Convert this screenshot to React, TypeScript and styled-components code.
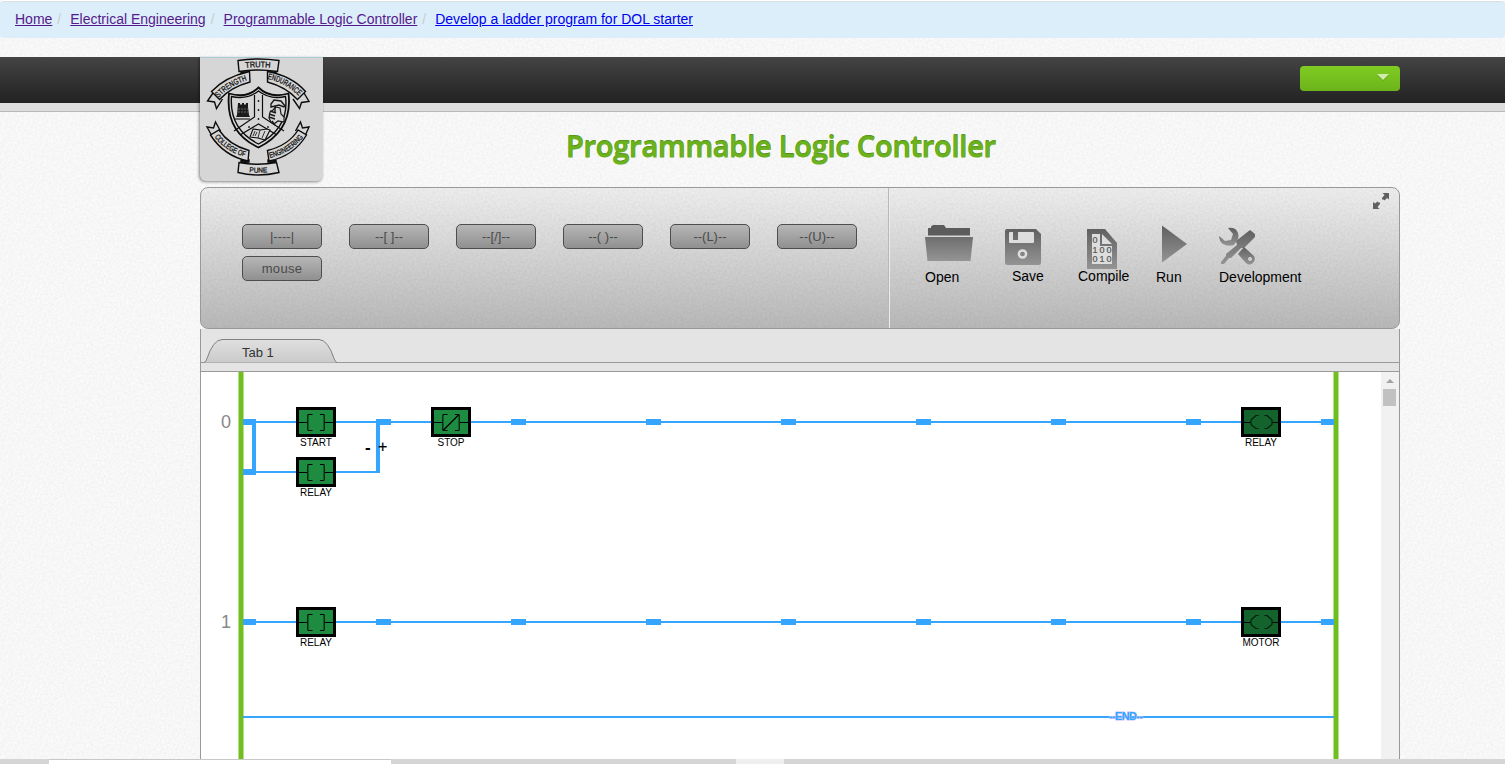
import React from "react";
import styled, { createGlobalStyle } from "styled-components";

const grain = (strength: number) =>
  `url("data:image/svg+xml,${encodeURIComponent(
    `<svg xmlns='http://www.w3.org/2000/svg' width='200' height='200'><filter id='n' x='0' y='0' width='100%' height='100%'><feTurbulence type='fractalNoise' baseFrequency='0.45' numOctaves='2' stitchTiles='stitch'/><feColorMatrix values='0 0 0 0 0  0 0 0 0 0  0 0 0 0 0  ${strength} 0 0 0 0'/></filter><rect width='200' height='200' filter='url(#n)'/></svg>`
  )}")`;

const GlobalStyle = createGlobalStyle`
  * { box-sizing: border-box; }
  body {
    margin: 0;
    overflow: hidden;
    font-family: "Liberation Sans", Arial, sans-serif;
    font-size: 14px;
    color: #000;
  }
`;

const Page = styled.div`
  display: flex;
  flex-direction: column;
  width: 100%;
  height: 764px;
  overflow: hidden;
  background: ${grain(0.065)} #fff;
`;

const Breadcrumb = styled.nav`
  flex: none;
  display: flex;
  align-items: flex-start;
  height: 38px;
  padding: 8px 15px 0;
  border-top: 1px solid #fff;
  background: #dceefa;
  box-shadow: inset 0 1px 0 #d9dfe3;
  border-radius: 4px;
  line-height: 20px;
`;

const Crumb = styled.a<{ $fresh?: boolean }>`
  color: ${(p) => (p.$fresh ? "#0000ee" : "#551a8b")};
  text-decoration: underline;
`;

const Slash = styled.span`
  padding: 0 9px 0 5px;
  color: #ccc;
`;

const Header = styled.header`
  flex: none;
  height: 55px;
  margin-top: 19px;
  border-bottom: 1px solid #b9b9b9;
  background: linear-gradient(#444, #222) 0 0 / 100% 46px no-repeat #ddd;
`;

const Container = styled.div`
  width: 1200px;
  margin: 0 0 0 200px;
`;

const HeaderRow = styled(Container)`
  display: flex;
  justify-content: space-between;
  align-items: flex-start;
`;

const LogoCard = styled.div`
  position: relative;
  width: 123px;
  height: 124px;
  background: #d6d6d6;
  border-top: 1px solid #a9cbd6;
  border-radius: 0 0 6px 6px;
  box-shadow: -1px 1px 3px rgba(0, 0, 0, 0.45);
  svg { display: block; margin-top: -1px; }
`;

const UserMenu = styled.button`
  display: flex;
  justify-content: flex-end;
  width: 100px;
  height: 25px;
  margin-top: 9px;
  padding: 8px 11px;
  border: 0;
  border-radius: 4px;
  background: linear-gradient(#7fcc22, #6db31b);
`;

const Title = styled.h1`
  flex: none;
  height: 75px;
  margin: 0;
  padding: 14px 0 0 566px;
  font: 600 29px/40px "Open Sans", sans-serif;
  letter-spacing: -0.25px;
  white-space: nowrap;
  color: #6bb31d;
  -webkit-text-stroke: 0.8px #68ad1d;
  text-shadow: 0 -1px 0 #4b8111;
`;

const Workspace = styled(Container)`
  flex: 1;
  display: flex;
  flex-direction: column;
  min-height: 0;
`;

const Toolbar = styled.section`
  flex: none;
  display: flex;
  height: 142px;
  border: 1px solid #999;
  border-radius: 8px;
  background: ${grain(0.08)}, linear-gradient(#f4f4f4, #bdbdbd);
`;

const Palette = styled.div`
  width: 688px;
  padding: 36px 0 0 41px;
  display: grid;
  grid-template-columns: repeat(6, 80px);
  grid-auto-rows: 25px;
  column-gap: 27px;
  row-gap: 7px;
  border-right: 1px solid #b8b8b8;
`;

const PaletteButton = styled.button`
  padding: 0;
  border: 1px solid #4d4d4d;
  border-radius: 5px;
  background: linear-gradient(#b6b6b6, #909090);
  font: 13px/22px "Liberation Sans", Arial, sans-serif;
  letter-spacing: ${(p) => (p.name === "mouse" ? "0.3px" : "0")};
  color: #4a4a4a;
`;

const Actions = styled.div`
  position: relative;
  flex: 1;
  display: flex;
  align-items: flex-start;
  padding: 34px 0 0 35px;
  border-left: 1px solid #ececec;
`;

const Action = styled.div<{ $w: number; $indent?: number; $up?: number; $textIndent?: number }>`
  width: ${(p) => p.$w}px;
  line-height: 16px;
  svg { display: block; height: 48px; margin-left: ${(p) => p.$indent ?? 0}px; overflow: visible; }
  span {
    display: block;
    margin-top: ${(p) => -1 - (p.$up ?? 0)}px;
    padding-left: ${(p) => p.$textIndent ?? 0}px;
    white-space: nowrap;
  }
`;

const Expand = styled.div`
  position: absolute;
  right: 10px;
  top: 5px;
  svg { display: block; }
`;

const Editor = styled.section`
  flex: 1;
  display: flex;
  flex-direction: column;
  min-height: 0;
  border: solid #999;
  border-width: 0 1px;
  background: #e4e4e4;
`;

const TabBar = styled.div`
  flex: none;
  height: 34px;
  padding: 10px 0 0 3px;
  border-bottom: 1px solid #999;
`;

const Tab = styled.div`
  position: relative;
  width: 133px;
  height: 24px;
  padding-left: 38px;
  font-size: 13px;
  line-height: 27px;
  color: #333;
  svg { position: absolute; left: 0; top: 0; }
  span { position: relative; }
`;

const Board = styled.div`
  flex: 1;
  display: flex;
  min-height: 0;
  margin-top: 8px;
  border-top: 1px solid #999;
  background: #fff;
`;

const Ladder = styled.svg`
  flex: none;
  display: block;
  width: 1180px;
  height: 387px;
`;

const ScrollTrack = styled.div`
  flex: 1;
  display: flex;
  flex-direction: column;
  align-items: center;
  padding: 7px 1px 0 0;
  background: #f1f1f1;
`;

const ScrollThumb = styled.div`
  width: 13px;
  height: 17px;
  margin-top: 6px;
  background: #c1c1c1;
`;

const BottomStrip = styled.footer`
  flex: none;
  display: flex;
  height: 5px;
  background: #d5d5d5;
`;

const StripPart = styled.div<{ $x: number; $w: number; $c: string; $line?: boolean }>`
  width: ${(p) => p.$w}px;
  margin-left: ${(p) => p.$x}px;
  background: ${(p) => p.$c};
  border-top: ${(p) => (p.$line ? "1px solid #c8c8c8" : "0")};
`;

const Crest = () => (
  <svg width="123" height="124" viewBox="10 7 123 124">
    <defs>
      <path id="arcStrength" d="M28.500 48Q39 35.500 60 29.500" />
      <path id="arcEndurance" d="M77.500 29Q97 33 111 48.500" />
      <path id="arcCollege" d="M24.500 87Q36 102.500 58 107.500" />
      <path id="arcEngineering" d="M80 108Q102 103 115 85" />
      <path id="arcTruth" d="M55.500 18Q68 16.500 82 18" />
      <path id="arcPune" d="M59.500 122Q68 123 80 122" />
    </defs>
    <g fill="#d6d6d6" stroke="#0c0c0c" strokeWidth="1.400">
      <path d="M51 22l8 0v2.500l-8-1zM86 22l-8 0v2.500l8-1zM51 112.500l8-.500v-2l-8 .5zM86 112.500l-8-.500v-2l8 .5z" fill="#222" />
      <path d="M48 10.500Q68 7.500 89 10.500L87.500 21.500Q68 18.500 49 21.500Z" />
      <path d="M48 122.500Q68 127.500 89 122.500L86.500 112.500Q68 116 49 112.500Z" />
      <path d="M23 43L17.500 51l7 1 2 6.500 6-9.500M114 43l5 8.500-7.500 1-2 6-6.500-9.500" />
      <path d="M22 86l-5-9 6.500 1L25.500 72l5 9M115 86l4-9-6.500 1L110.500 72l-5 9" />
      <path d="M59.500 21.500Q35 27 21.500 41.500L29.500 49.500Q41 37 60 32Z" />
      <path d="M77.500 21.500Q102 26 115.500 41.500L107.500 49.500Q96 37 77.500 32Z" />
      <path d="M20.500 85Q34 106 58 111L59 100.500Q39 95 29 80Z" />
      <path d="M116.500 85Q104 106 79 111L77.500 100.500Q99 95 108 80Z" />
      <path d="M39 43.500Q57 49 68.500 37.500Q80 49 98.500 43.500Q103 80 68.500 97.500Q35 82 39 43.500Z" strokeWidth="1.800" />
      <path d="M41.500 46.500Q57 50 68.500 41Q80 50 95.500 46.500Q99.500 78 68.500 94Q39 79 41.500 46.500Z" />
      <path d="M64.500 45V67L44 81M72.500 45V67L94 81M50 85L68.500 74L87 85" fill="none" strokeWidth="1.200" />
      <path d="M63 79l7 1 7-1 3 1-5 10-7-2-8-1z" strokeWidth="1.100" />
    </g>
    <g fill="#1a1a1a">
      <path d="M48 53h2v1.500h2V53h2v1.500h2V53h2v4l1 8 1 2H46l1-2z" />
      <path d="M48 59h10M48 62h10" stroke="#888" strokeDasharray="2 1" strokeWidth=".7" />
      <path d="M45 69h15" stroke="#222" strokeWidth="1.200" />
      <path d="M81 54l3-4 7 1 4 5-1 1-5-2-8 2z" fill="#d6d6d6" stroke="#1a1a1a" strokeWidth="1.400" />
      <path d="M86 57l4 1 1 6 3 3v5l-6-1-4 3-3-2-2-4 1-6 3-2z" fill="#d6d6d6" stroke="#1a1a1a" strokeWidth="1.200" />
      <path d="M80 61l6 2M79 64l6 2M79 67l6 2M82 71l3 4M85 56v6" stroke="#1a1a1a" strokeWidth="1.400" />
      <circle cx="68.500" cy="51" r=".9" /><circle cx="68.500" cy="60" r=".9" /><circle cx="68.500" cy="69" r=".9" />
      <circle cx="59" cy="77" r=".9" /><circle cx="78" cy="77" r=".9" />
      <path d="M65 81l-2 5M67 82l-2 4M70 80l-2 8M75 81l-3 7" stroke="#222" strokeWidth=".9" />
    </g>
    <g fontFamily="Liberation Sans, Arial, sans-serif" fontSize="8.300" fill="#111" stroke="#111" strokeWidth=".3">
      <text><textPath href="#arcTruth" textLength="25" lengthAdjust="spacingAndGlyphs">TRUTH</textPath></text>
      <text><textPath href="#arcStrength" textLength="34" lengthAdjust="spacingAndGlyphs">STRENGTH</textPath></text>
      <text><textPath href="#arcEndurance" textLength="36" lengthAdjust="spacingAndGlyphs">ENDURANCE</textPath></text>
      <text fontSize="7.700"><textPath href="#arcCollege" textLength="37" lengthAdjust="spacingAndGlyphs">COLLEGE OF</textPath></text>
      <text fontSize="7.700"><textPath href="#arcEngineering" textLength="40" lengthAdjust="spacingAndGlyphs">ENGINEERING</textPath></text>
      <text fontSize="7"><textPath href="#arcPune" textLength="18" lengthAdjust="spacingAndGlyphs">PUNE</textPath></text>
    </g>
  </svg>
);

const IconGradient = ({ id }: { id: string }) => (
  <defs>
    <linearGradient id={id} x1="0" y1="0" x2="0" y2="1">
      <stop offset="0" stopColor="#606060" />
      <stop offset="1" stopColor="#949494" />
    </linearGradient>
  </defs>
);

const OpenIcon = () => (
  <svg width="48" height="48">
    <defs>
      <linearGradient id="gOpen" x1="0" y1="0" x2="0" y2="1">
        <stop offset="0" stopColor="#6e6e6e" />
        <stop offset="1" stopColor="#949494" />
      </linearGradient>
    </defs>
    <path d="M3 13.500V6h3V4.500L8 3h11l2 3h24v7.500z" fill="#5c5c5c" />
    <path d="M0 15h48l-2.500 24h-43z" fill="url(#gOpen)" />
  </svg>
);

const SaveIcon = () => (
  <svg width="36" height="48">
    <IconGradient id="gSave" />
    <path fill="url(#gSave)" d="M2 7h29l5 5v29q0 2-2 2H2q-2 0-2-2V9q0-2 2-2z" />
    <path fill="#ddd" d="M5 10h3v8h5v-8h15q1 0 1 1v9q0 1-1 1H5q-1 0-1-1v-9q0-1 1-1z" />
    <circle cx="17.500" cy="32" r="3.600" fill="none" stroke="#ddd" strokeWidth="2.500" />
  </svg>
);

const CompileIcon = () => (
  <svg width="30" height="48">
    <IconGradient id="gComp" />
    <path fill="url(#gComp)" d="M0 7h18l12 14v26H0z" />
    <path fill="#ddd" d="M5 12h8v12h12v18H5zM15 12l10 10H15z" />
    <g fontFamily="Liberation Sans, Arial, sans-serif" fontSize="9" fill="#555" stroke="#555" strokeWidth=".2">
      <text x="5.500" y="20.500">0</text>
      <text x="5.500 12.500 19.500" y="30.500">100</text>
      <text x="5.500 12.500 19.500" y="40">010</text>
    </g>
  </svg>
);

const RunIcon = () => (
  <svg width="25" height="48">
    <IconGradient id="gRun" />
    <path fill="url(#gRun)" d="M0 3.500L25 22L0 40.500z" />
  </svg>
);

const DevelopmentIcon = () => (
  <svg width="36" height="48">
    <IconGradient id="gDev" />
    <g fill="url(#gDev)">
      <path d="M9 6q8-1 10 5 1 3 0 6l-4 6q-6 2-11-1-4-3-4-8l6 5 6-1 2-6z" />
      <path d="M31 8l5 4v3L25 26l-3 0-10 10-2 0-5 6-3-0 0-2 5-6 0-2 11-9-1-4z" />
      <path fillRule="evenodd" d="M25 25l10 9q2 4-1 7-4 3-7 0l-8-9zM31 35a2 2 0 1 0 .1 0z" />
    </g>
  </svg>
);

const rowNodes = [376, 511, 646, 781, 916, 1051, 1186];

const Device = ({ x, y, kind, label }: { x: number; y: number; kind: "open" | "closed" | "coil"; label: string }) => (
  <g transform={`translate(${x} ${y})`}>
    <rect x="1.500" y="1.500" width="37" height="27" fill={kind === "coil" ? "#14632c" : "#1e8c40"} stroke="#000" strokeWidth="3" />
    {kind === "coil" ? (
      <g fill="none" stroke="#051f0c">
        <path d="M3 15.500h7M31 15.500h6" stroke="#000" />
        <path d="M17.500 8.500H15L10 13V17.500L15 21.500H17.500M23.500 8.500H26L31 13V17.500L26 21.500H23.500" strokeWidth="1.100" strokeLinejoin="round" />
      </g>
    ) : (
      <g fill="none" stroke="#000">
        <path d="M3 15.500h8M29 15.500h8" />
        <path d="M16.500 7.500H12M16.500 23.500H12M24 7.500h4M24 23.500h4" />
        <path d="M11.750 7.500V23.500M28.250 7.500V23.500" stroke="#062a12" strokeWidth="1.500" />
        {kind === "closed" && <path d="M12 23.500L28 7.500" strokeWidth="1.300" />}
      </g>
    )}
    <text x="20" y="39" textAnchor="middle" fontSize="10" textLength={label === "MOTOR" ? 37 : label === "STOP" ? 27 : 32} lengthAdjust="spacingAndGlyphs" fill="#000">{label}</text>
  </g>
);

const Rung = ({ y, index }: { y: number; index: number }) => (
  <g fill="#35a5ff">
    <rect x="243" y={y - 1} width="1091" height="2" />
    <rect x="243" y={y - 3} width="13" height="6" />
    {rowNodes.map((x) => (
      <rect key={x} x={x} y={y - 3} width="15" height="6" />
    ))}
    <rect x="1321" y={y - 3} width="13" height="6" />
    <text x="221" y={y + 6} fontSize="18" fill="#888">{index}</text>
  </g>
);

const App = () => (
  <>
    <GlobalStyle />
    <Page>
      <Breadcrumb>
        <Crumb>Home</Crumb><Slash>/</Slash>
        <Crumb>Electrical Engineering</Crumb><Slash>/</Slash>
        <Crumb>Programmable Logic Controller</Crumb><Slash>/</Slash>
        <Crumb $fresh>Develop a ladder program for DOL starter</Crumb>
      </Breadcrumb>
      <Header>
        <HeaderRow>
          <LogoCard><Crest /></LogoCard>
          <UserMenu aria-label="Account">
            <svg width="12" height="7"><path d="M0 1h12L6 7z" fill="#4d8a10" opacity=".5" /><path d="M0 0h12L6 6z" fill="#cfebae" /></svg>
          </UserMenu>
        </HeaderRow>
      </Header>
      <Title>Programmable Logic Controller</Title>
      <Workspace>
        <Toolbar>
          <Palette>
            {["|----|", "--[ ]--", "--[/]--", "--( )--", "--(L)--", "--(U)--", "mouse"].map((t) => (
              <PaletteButton key={t} name={t}>{t}</PaletteButton>
            ))}
          </Palette>
          <Actions>
            <Action $w={80}><OpenIcon /><span>Open</span></Action>
            <Action $w={73} $up={1} $textIndent={7}><SaveIcon /><span>Save</span></Action>
            <Action $w={78} $indent={9} $up={1}><CompileIcon /><span>Compile</span></Action>
            <Action $w={63} $indent={6}><RunIcon /><span>Run</span></Action>
            <Action $w={90}><DevelopmentIcon /><span>Development</span></Action>
            <Expand>
              <svg width="16" height="16" fill="#606060">
                <path d="M9.500 0H16v6.500L14 5l-2.500 2.500-1-1H9v-1.500L11.500 2zM0 9l2 1.500L4.500 8.500l1 1H7v1.500L4.500 14l2 2H0z" />
              </svg>
            </Expand>
          </Actions>
        </Toolbar>
        <Editor>
          <TabBar>
            <Tab>
              <svg width="133" height="24">
                <defs>
                  <linearGradient id="gTab" x1="0" y1="0" x2="0" y2="1">
                    <stop offset="0" stopColor="#e0e0e0" /><stop offset="1" stopColor="#cacaca" />
                  </linearGradient>
                </defs>
                <path d="M0 23.500Q1.500 23.500 3 19.500Q9 1 18 .5H115Q124 1 130 19.500Q131.500 23.500 133 23.500" fill="url(#gTab)" stroke="#808080" />
              </svg>
              <span>Tab 1</span>
            </Tab>
          </TabBar>
          <Board>
            <Ladder viewBox="201 372 1180 387" fontFamily="Liberation Sans, Arial, sans-serif">
              <g fill="#b5e08a">
                <rect x="238" y="372" width="6" height="387" />
                <rect x="1333" y="372" width="6" height="387" />
              </g>
              <g fill="#70be1f">
                <rect x="239" y="372" width="4" height="387" />
                <rect x="1334" y="372" width="4" height="387" />
              </g>
              <Rung y={422} index={0} />
              <Rung y={622} index={1} />
              <g fill="#35a5ff">
                <rect x="252" y="419" width="4" height="56" />
                <rect x="243" y="469" width="13" height="6" />
                <rect x="243" y="471" width="137" height="2" />
                <rect x="376" y="419" width="4" height="54" />
                <rect x="243" y="716" width="1091" height="2" />
              </g>
              <Device x={296} y={407} kind="open" label="START" />
              <Device x={296} y={457} kind="open" label="RELAY" />
              <Device x={431} y={407} kind="closed" label="STOP" />
              <Device x={1241} y={407} kind="coil" label="RELAY" />
              <Device x={296} y={607} kind="open" label="RELAY" />
              <Device x={1241} y={607} kind="coil" label="MOTOR" />
              <text x="365" y="453" fontSize="17" fontWeight="700">-</text>
              <text x="378" y="452" fontSize="16" stroke="#000" strokeWidth=".2">+</text>
              <text x="1126" y="720" fontSize="11" fontWeight="700" textAnchor="middle" textLength="34" fill="#35a5ff" stroke="#c9c4ff" strokeWidth="1" paintOrder="stroke">--END--</text>
            </Ladder>
            <ScrollTrack>
              <svg width="8" height="4"><path d="M4 0l4 4H0z" fill="#a3a3a3" /></svg>
              <ScrollThumb />
            </ScrollTrack>
          </Board>
        </Editor>
      </Workspace>
      <BottomStrip>
        <StripPart $x={49} $w={342} $c="#fff" $line />
        <StripPart $x={345} $w={48} $c="#eee" />
      </BottomStrip>
    </Page>
  </>
);

export default App;
